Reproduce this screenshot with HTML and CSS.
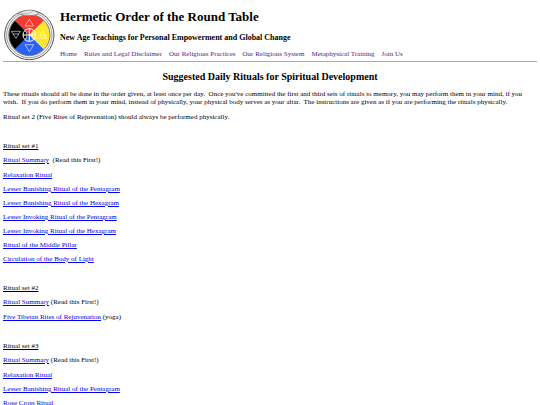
FILE: index.html
```html
<!DOCTYPE html>
<html lang="en">
<head>
<meta charset="utf-8">
<meta name="viewport" content="width=device-width, initial-scale=1">
<title>Suggested Daily Rituals for Spiritual Development</title>
<link rel="stylesheet" href="styles.css">
</head>
<body>
<header class="masthead">
  <svg class="logo" viewBox="0 0 156 156" role="img" aria-label="Hermetic Order of the Round Table emblem">
    <circle cx="79" cy="78" r="74" fill="#f4f4f4" stroke="#555" stroke-width="3"/>
    <circle cx="79" cy="78" r="68" fill="none" stroke="#777" stroke-width="2"/>
    <path d="M79 78 36 35A61 61 0 0 1 122 35Z" fill="#f43a30"/>
    <path d="M79 78 122 35A61 61 0 0 1 122 121Z" fill="#ffe632"/>
    <path d="M79 78 122 121A61 61 0 0 1 36 121Z" fill="#2b62f2"/>
    <path d="M79 78 36 121A61 61 0 0 1 36 35Z" fill="#000"/>
    <circle cx="79" cy="78" r="62" fill="none" stroke="#444" stroke-width="2"/>
    <path d="M44 14Q62 3 82 3Q96 4 108 13Q99 20 83 19Q63 20 44 14Z" fill="#eee" stroke="#777" stroke-width="2"/>
    <path d="M54 13Q72 15 90 9" fill="none" stroke="#999" stroke-width="2"/>
    <g fill="none" stroke="#fff" stroke-width="3">
      <circle cx="79" cy="78" r="19"/>
      <path d="M79 59V97M60 78H98"/>
      <path d="M67 65Q77 78 67 91M91 65Q81 78 91 91" stroke-width="2"/>
    </g>
    <g fill="none" stroke="#fff" stroke-width="2" opacity=".85">
      <path d="M79 31 92 51H66ZM79 128 66 107H92ZM25 67H52L39 88ZM30 75H48M105 87 118 66 132 87ZM110 80H127"/>
    </g>
  </svg>
  <div class="masthead-text">
    <h1>Hermetic Order of the Round Table</h1>
    <p class="tagline">New Age Teachings for Personal Empowerment and Global Change</p>
    <nav class="nav">
      <a href="#">Home</a>
      <a href="#">Rules and Legal Disclaimer</a>
      <a href="#">Our Religious Practices</a>
      <a href="#">Our Religious System</a>
      <a href="#">Metaphysical Training</a>
      <a href="#">Join Us</a>
    </nav>
  </div>
</header>
<main>
  <h2>Suggested Daily Rituals for Spiritual Development</h2>
  <p>These rituals should all be done in the order given, at least once per day.&nbsp; Once you've committed the first and third sets of rituals to memory, you may perform them in your mind, if you wish.&nbsp; If you do perform them in your mind, instead of physically, your physical body serves as your altar.&nbsp; The instructions are given as if you are performing the rituals physically.</p>
  <p>Ritual set 2 (Five Rites of Rejuvenation) should always be performed physically.</p>
  <section class="ritual-set">
    <h3>Ritual set #1</h3>
    <p class="summary"><a href="#">Ritual Summary</a>&nbsp; (Read this First!)</p>
    <p><a href="#">Relaxation Ritual</a></p>
    <p><a href="#">Lesser Banishing Ritual of the Pentagram</a></p>
    <p><a href="#">Lesser Banishing Ritual of the Hexagram</a></p>
    <p><a href="#">Lesser Invoking Ritual of the Pentagram</a></p>
    <p><a href="#">Lesser Invoking Ritual of the Hexagram</a></p>
    <p><a href="#">Ritual of the Middle Pillar</a></p>
    <p><a href="#">Circulation of the Body of Light</a></p>
  </section>
  <section class="ritual-set">
    <h3>Ritual set #2</h3>
    <p class="summary"><a href="#">Ritual Summary</a> (Read this First!)</p>
    <p><a href="#">Five Tibetan Rites of Rejuvenation</a> (yoga)</p>
  </section>
  <section class="ritual-set">
    <h3>Ritual set #3</h3>
    <p class="summary"><a href="#">Ritual Summary</a> (Read this First!)</p>
    <p><a href="#">Relaxation Ritual</a></p>
    <p><a href="#">Lesser Banishing Ritual of the Pentagram</a></p>
    <p><a href="#">Rose Cross Ritual</a></p>
  </section>
</main>
</body>
</html>
```
FILE: styles.css
```css
html {
  overflow-x: hidden;
  scrollbar-width: none;
}
body {
  margin: 0;
  padding: 9px 3px 0;
  background: #fff;
  color: #000;
  font: 7px/8px "Liberation Serif", "Times New Roman", serif;
}
h1, h2, h3, p {
  margin: 0;
}
a {
  color: #00e;
}
.masthead {
  display: flex;
  gap: 5px;
  border-bottom: 1px solid #aaa;
}
.logo {
  flex: none;
  width: 52px;
  height: 52px;
}
.masthead-text {
  white-space: nowrap;
}
h1 {
  font-size: 13px;
  line-height: 16px;
}
.tagline {
  margin-top: 8px;
  font-size: 8px;
  font-weight: bold;
  line-height: 10px;
}
.nav {
  display: flex;
  gap: 7px;
  margin-top: 7px;
}
.nav a {
  color: #551a8b;
  text-decoration: none;
}
h2 {
  margin: 9px 0 7px;
  font-size: 10px;
  line-height: 12px;
  text-align: center;
}
main > p {
  margin-bottom: 7px;
}
.ritual-set {
  display: flex;
  flex-direction: column;
  gap: 6px;
  margin-top: 21px;
}
h3 {
  font-size: 7px;
  font-weight: normal;
  line-height: 8px;
  text-decoration: underline;
}
.summary {
  margin-bottom: 1px;
}
```
